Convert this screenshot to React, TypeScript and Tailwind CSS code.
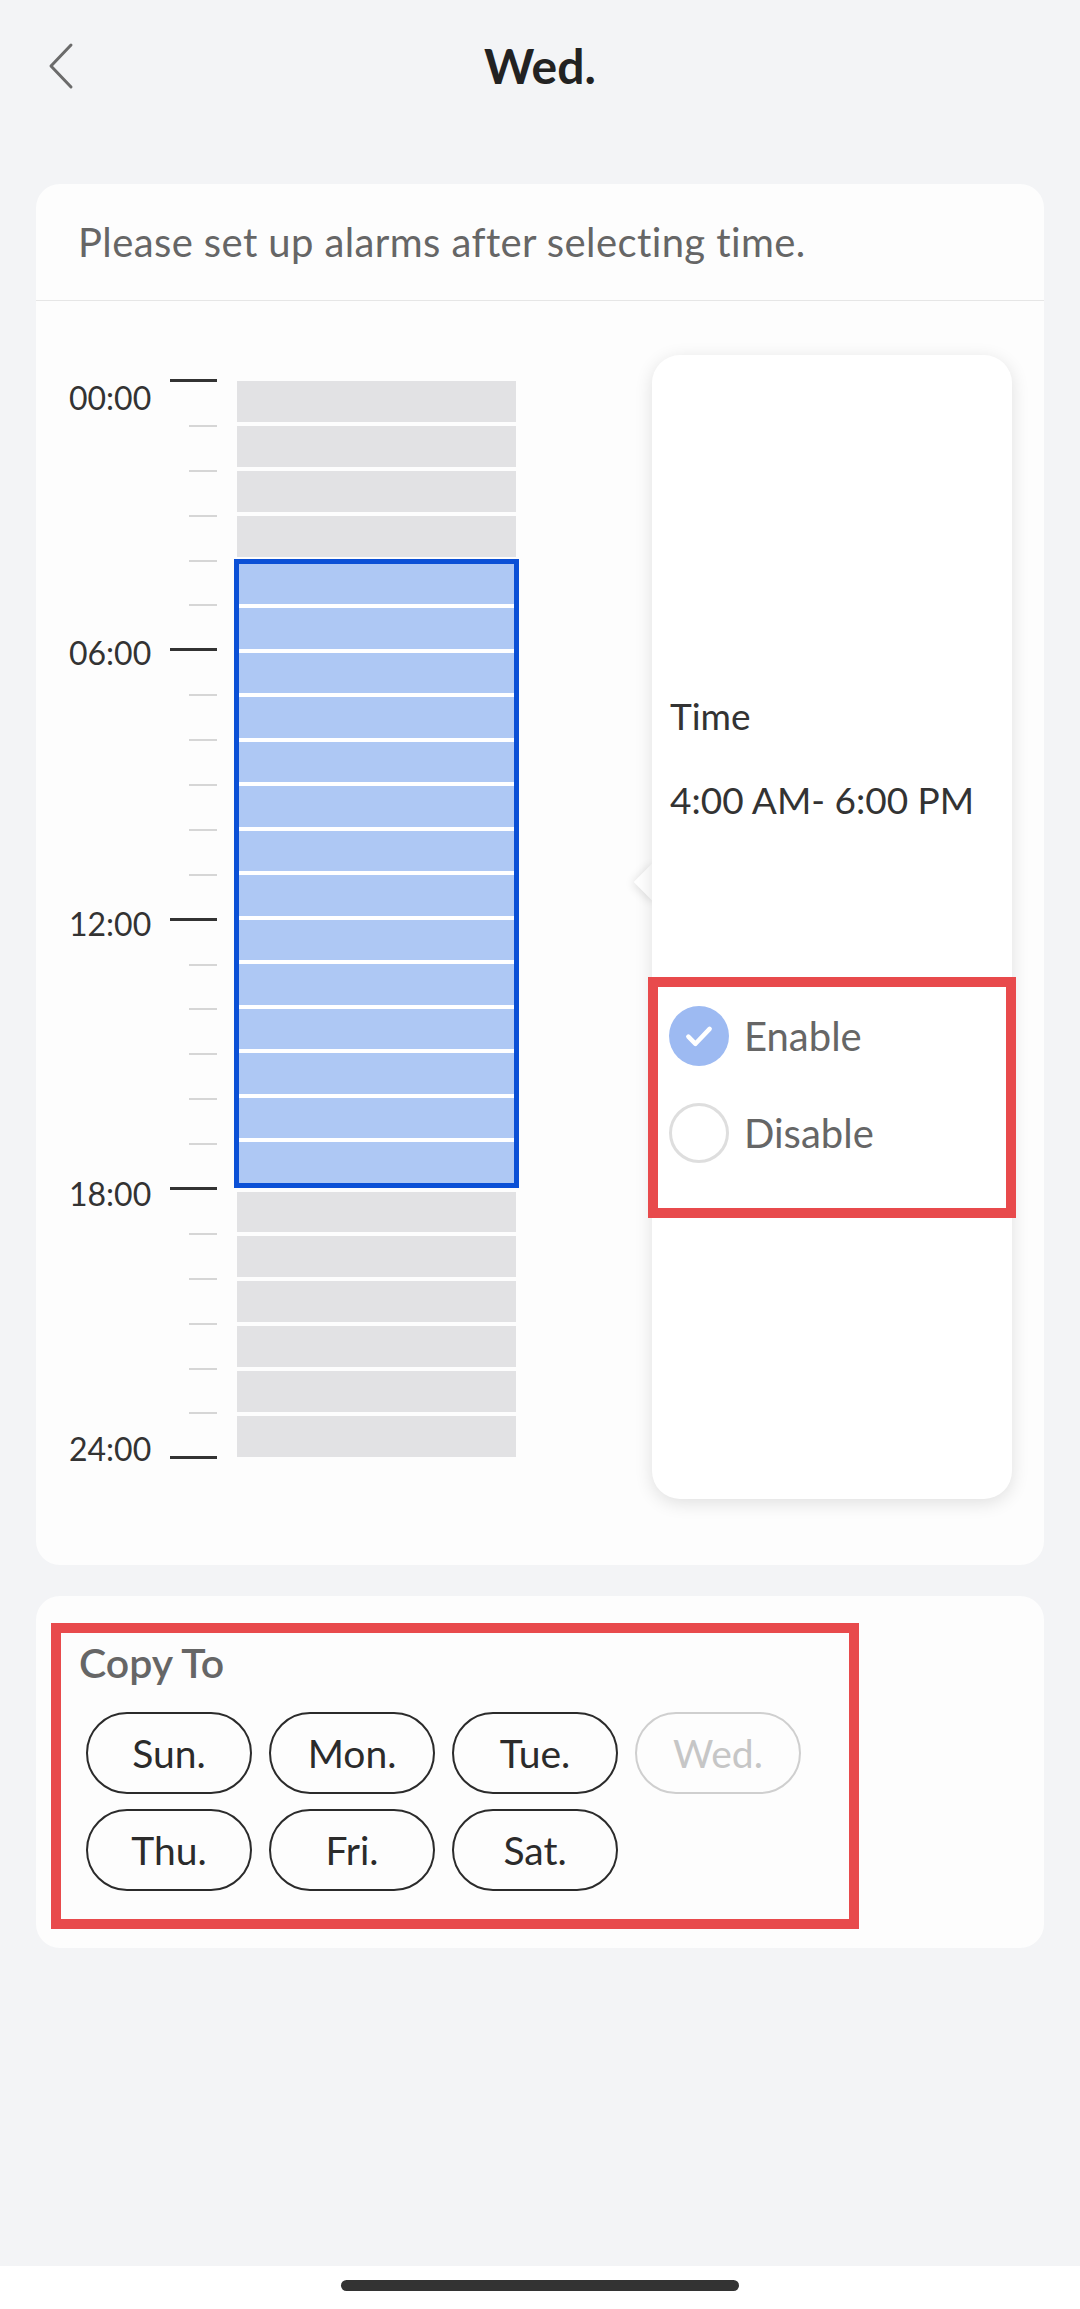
const hours = Array.from({ length: 24 }, (_, i) => i)
const ticks = Array.from({ length: 25 }, (_, i) => i)
const selStart = 4
const selEnd = 18

const font = { fontFamily: "Lato, 'Noto Sans', sans-serif" }

const Tick = ({ major }: { major: boolean }) => (
  <div className="h-[44.9px] flex flex-col items-end">
    {major ? (
      <div className="w-[47px] h-[3px] bg-[#333] -mt-[1px]" />
    ) : (
      <div className="w-[28px] h-[2px] bg-[#d6d6d6]" />
    )}
  </div>
)

const GrayBlock = () => <div className="h-[40.9px] bg-[#e2e2e4]" />

const Radio = ({ checked, label }: { checked: boolean; label: string }) => (
  <div className="flex items-center gap-[15px]">
    {checked ? (
      <div className="w-[60px] h-[60px] rounded-full bg-[#9dbaf2] flex items-center justify-center">
        <svg width="34" height="34" viewBox="0 0 24 24" fill="none">
          <path d="M4.5 12.5l5 5 10-10.5" stroke="#fff" strokeWidth="3.2" strokeLinecap="round" strokeLinejoin="round" />
        </svg>
      </div>
    ) : (
      <div className="w-[60px] h-[60px] rounded-full border-[3px] border-[#dedede] bg-white" />
    )}
    <span className="text-[40px] leading-[46px] text-[#666]">{label}</span>
  </div>
)

const Pill = ({ day, disabled }: { day: string; disabled?: boolean }) => (
  <div
    className={
      disabled
        ? "w-[166px] h-[82px] rounded-full border-[2.5px] border-[#cfcfcf] flex items-center justify-center text-[39px] text-[#c6c6c6]"
        : "w-[166px] h-[82px] rounded-full border-[2.5px] border-[#2b2b2b] flex items-center justify-center text-[39px] text-[#2b2b2b]"
    }
  >
    {day}
  </div>
)

const App = () => {
  const before = hours.filter((h) => h < selStart)
  const selected = hours.filter((h) => h >= selStart && h < selEnd)
  const after = hours.filter((h) => h >= selEnd)

  return (
    <div className="w-[1080px] h-[2309px] bg-[#f3f4f6] flex flex-col" style={font}>
      <div className="flex-1 flex flex-col">
        {/* top bar */}
        <div className="h-[132px] flex items-center relative">
          <div className="absolute left-[46px] top-[42px]">
            <svg width="30" height="48" viewBox="0 0 30 48" fill="none">
              <path d="M25 3L5 24l20 21" stroke="#6b6b6b" strokeWidth="3" strokeLinecap="round" strokeLinejoin="round" />
            </svg>
          </div>
          <h1 className="w-full text-center text-[48px] font-bold text-[#222]">Wed.</h1>
        </div>

        {/* schedule card */}
        <div className="mx-[36px] mt-[52px] h-[1381px] rounded-[24px] bg-[#fdfdfd] flex flex-col">
          <div className="h-[117px] px-[42px] flex items-center border-b border-[#e6e6e6]">
            <p className="text-[40px] tracking-[0.4px] text-[#666]">Please set up alarms after selecting time.</p>
          </div>

          <div className="flex-1 flex">
            {/* axis labels */}
            <div className="w-[134px] pl-[33px] pt-[79px] flex flex-col text-[32px] leading-[36px] text-[#333]">
              <span className="h-[36px]">00:00</span>
              <span className="mt-[219px] h-[36px]">06:00</span>
              <span className="mt-[235px] h-[36px]">12:00</span>
              <span className="mt-[234px] h-[36px]">18:00</span>
              <span className="mt-[219px] h-[36px]">24:00</span>
            </div>

            {/* ticks */}
            <div className="w-[47px] pt-[79px] flex flex-col">
              {ticks.map((t) => (
                <Tick key={t} major={t % 6 === 0} />
              ))}
            </div>

            {/* blocks */}
            <div className="w-[279px] ml-[20px] pt-[80px] flex flex-col gap-[4px]">
              {before.map((h) => (
                <GrayBlock key={h} />
              ))}
              <div className="-mx-[3px] -mt-[2px] border-[5px] border-[#0b50d6] bg-white flex flex-col gap-[4px]">
                {selected.map((h) => (
                  <div key={h} className="h-[40.5px] bg-[#aec8f4]" />
                ))}
              </div>
              {after.map((h) => (
                <GrayBlock key={h} />
              ))}
            </div>

            {/* popover */}
            <div className="ml-auto mr-[32px] mt-[54px] w-[360px] h-[1144px] relative">
              <div className="absolute left-[-13px] top-[514px] w-[26px] h-[26px] rotate-45 bg-white shadow-[0_2px_10px_rgba(0,0,0,0.12)]" />
              <div className="relative h-full rounded-[28px] bg-white shadow-[0_4px_18px_rgba(0,0,0,0.12)] flex flex-col">
                <div className="absolute left-0 top-[510px] w-[16px] h-[34px] bg-white" />
                <div className="relative pl-[18px] pt-[339px] text-[37px] leading-[44px] text-[#333]">
                  <p>Time</p>
                  <p className="mt-[40px]">4:00 AM- 6:00 PM</p>
                </div>
                <div className="relative -mx-[4px] mt-[155px] h-[241px] border-[10px] border-[#e84a4c] pl-[11px] pt-[19px] flex flex-col gap-[37px]">
                  <Radio checked label="Enable" />
                  <Radio checked={false} label="Disable" />
                </div>
              </div>
            </div>
          </div>
        </div>

        {/* copy to card */}
        <div className="mx-[36px] mt-[31px] h-[352px] rounded-[24px] bg-[#fdfdfd] pt-[27px] pl-[15px]">
          <div className="w-[808px] h-[306px] border-[10px] border-[#e84a4c] pt-[8px]">
            <p className="pl-[18px] text-[41px] leading-[44px] font-semibold text-[#666]">Copy To</p>
            <div className="pl-[25px] mt-[27px] grid grid-cols-[repeat(4,166px)] gap-x-[17px] gap-y-[15px]">
              <Pill day="Sun." />
              <Pill day="Mon." />
              <Pill day="Tue." />
              <Pill day="Wed." disabled />
              <Pill day="Thu." />
              <Pill day="Fri." />
              <Pill day="Sat." />
            </div>
          </div>
        </div>
      </div>

      {/* home indicator */}
      <div className="h-[43px] bg-white flex justify-center pt-[14px]">
        <div className="w-[398px] h-[11px] rounded-full bg-[#333]" />
      </div>
    </div>
  )
}

export default App
